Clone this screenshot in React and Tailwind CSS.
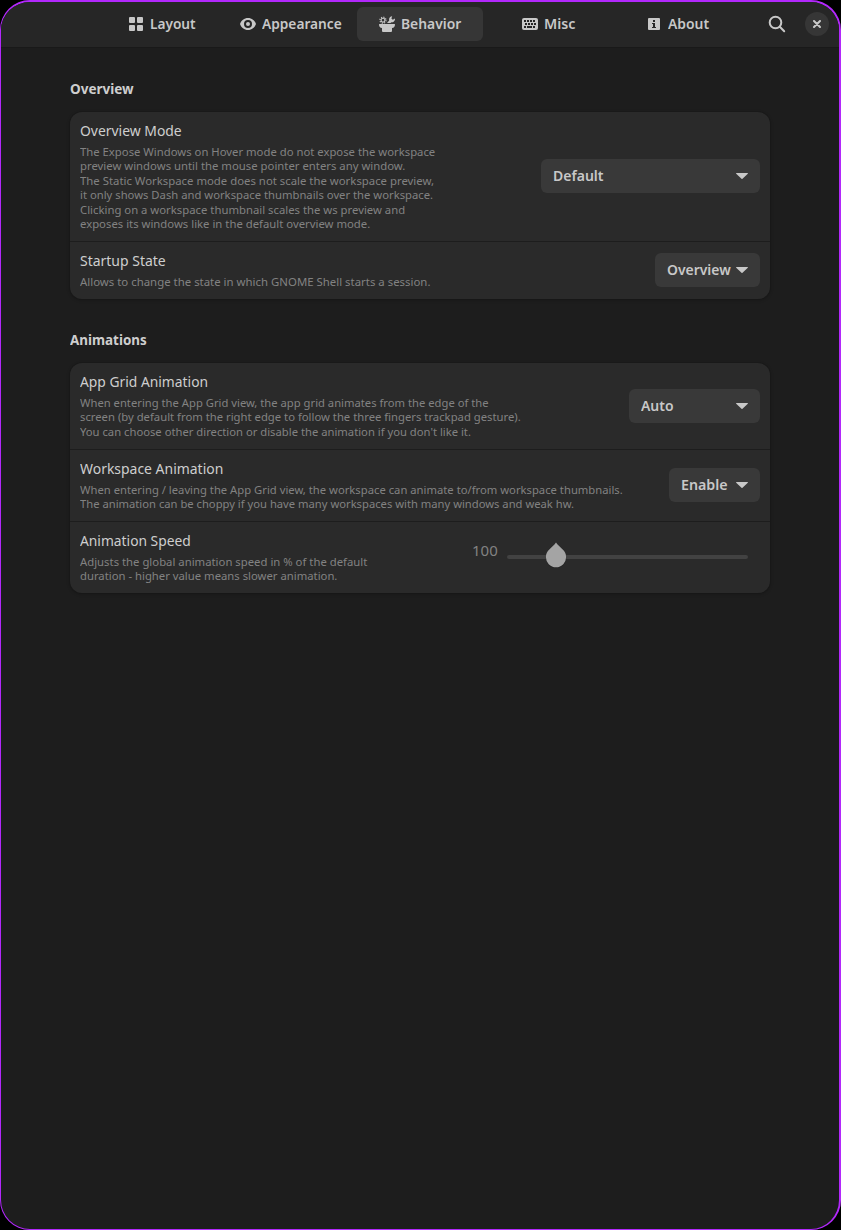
import { useLayoutEffect, useRef } from 'react';

function Fit({ w, className = '', children }) {
  const ref = useRef(null);
  useLayoutEffect(() => {
    const el = ref.current;
    el.style.transform = `scaleX(${w / el.offsetWidth})`;
  }, [w]);
  return (
    <span className={`block ${className}`} style={{ width: w }}>
      <span ref={ref} className="inline-block origin-left whitespace-nowrap align-top">{children}</span>
    </span>
  );
}

const LayoutIcon = () => (
  <svg width="16" height="16" viewBox="0 0 16 16" fill="currentColor">
    <rect x="1" y="1" width="6" height="6" rx="1" />
    <rect x="9" y="1" width="6" height="6" rx="1" />
    <rect x="1" y="9" width="6" height="6" rx="1" />
    <rect x="9" y="9" width="6" height="6" rx="1" />
  </svg>
);

const EyeIcon = () => (
  <svg width="16" height="16" viewBox="0 0 16 16" fill="currentColor">
    <path fillRule="evenodd" d="M8 2C4.2 2 1.200 4.500 0 8c1.200 3.500 4.200 6 8 6s6.800-2.500 8-6c-1.200-3.500-4.200-6-8-6zm0 2a4 4 0 1 1 0 8 4 4 0 0 1 0-8z" />
    <circle cx="8" cy="8" r="2" />
  </svg>
);

const BehaviorIcon = () => (
  <svg width="16" height="16" viewBox="0 0 16 16" fill="currentColor">
    <circle cx="4" cy="4.200" r="1.900" fill="none" stroke="currentColor" strokeWidth="1.100" />
    <circle cx="4" cy="4.200" r="3" fill="none" stroke="currentColor" strokeWidth="1.300" strokeDasharray="1.150 1.206" />
    <path d="M8 7 10.200 4.600C9.600 2.400 11 .5 13.200.3L12.400 2.500l1.400 1.200L16 2.500c.2 2.400-1.600 4-3.600 3.800L11.500 7z" />
    <path d="M.5 8h15a.5.5 0 0 1 .5.500c0 2-1 3.300-3 3.500v3a1 1 0 0 1-1 1H4a1 1 0 0 1-1-1v-3c-2-.2-3-1.500-3-3.500A.5.500 0 0 1 .5 8z" />
  </svg>
);

const KeyboardIcon = () => (
  <svg width="16" height="16" viewBox="0 0 16 16">
    <rect y="2" width="16" height="12" rx="2" fill="currentColor" />
    <path fill="#262626" d="M2 4h2v2H2zM5 4h2v2H5zM8 4h2v2H8zM11 4h2v2h-2zM3 7h2v2H3zM6 7h2v2H6zM9 7h2v2H9zM12 7h2v2h-2zM2 10h2v2H2zM5 10h5v2H5zM11 10h2v2h-2z" />
  </svg>
);

const AboutIcon = () => (
  <svg width="16" height="16" viewBox="0 0 16 16">
    <rect x="2" y="2" width="12" height="12" rx="1" fill="currentColor" />
    <path fill="#262626" d="M7 4h2v2H7zM6 7h3v4h1v1H6v-1h1V8H6z" />
  </svg>
);

const SearchIcon = () => (
  <svg width="18" height="18" viewBox="0 0 18 18" fill="none" stroke="currentColor" strokeWidth="2">
    <circle cx="7.500" cy="7.500" r="5.800" />
    <path d="m11.800 11.800 4.400 4.400" strokeLinecap="round" />
  </svg>
);

const Arrow = () => (
  <svg width="12" height="6" viewBox="0 0 12 6" fill="currentColor">
    <path d="M.5 0h11c.5 0 .6.500.3.800L6.500 5.800a.7.7 0 0 1-1 0L.2.800C-.1.500 0 0 .5 0z" />
  </svg>
);

const tabs = [
  { label: 'Layout', w: 46, textW: 45.500, Icon: LayoutIcon },
  { label: 'Appearance', w: 80, textW: 79.500, Icon: EyeIcon },
  { label: 'Behavior', w: 61, textW: 60, Icon: BehaviorIcon, active: true },
  { label: 'Misc', w: 32, textW: 31.300, Icon: KeyboardIcon },
  { label: 'About', w: 41.5, textW: 40.700, Icon: AboutIcon },
];

function Select({ className, label, w }) {
  return (
    <button className={`flex h-[34px] shrink-0 items-center justify-between rounded-md bg-[#393939] px-3 text-[15px] leading-5 font-semibold text-[#c8c8c8] ${className}`}>
      <Fit w={w} className="pb-0.5">{label}</Fit>
      <Arrow />
    </button>
  );
}

function Row({ className, title, titleW, lines, children }) {
  return (
    <div className={`flex items-start justify-between px-2.5 ${className}`}>
      <div className="pt-2">
        <Fit w={titleW} className="h-5 text-[15px] leading-5 text-[#cecece]">{title}</Fit>
        <div className="pt-[5px] text-[11.5px] leading-[14.4px] text-[#828282]">
          {lines.map(([text, w]) => (
            <Fit key={text} w={w} className="h-[14.4px]">{text}</Fit>
          ))}
        </div>
      </div>
      {children}
    </div>
  );
}

const card = 'overflow-hidden rounded-xl bg-[#2a2a2a] shadow-[0_1px_3px_1px_rgba(0,0,0,0.15),0_0_0_1px_rgba(0,0,0,0.05)]';

export default function App() {
  return (
    <div className="h-[1230px] w-[841px] bg-black font-['Noto_Sans',sans-serif]">
      <div className="h-full overflow-hidden rounded-[30px] border-t-2 border-r-2 border-b border-l border-[#b228fb] bg-[#1d1d1d]">
        <header className="flex h-[46px] items-start border-b border-[#191919] bg-[#262626] pt-[5px] pl-[98px] text-[#c8c8c8]">
          <nav className="flex gap-[3px]">
            {tabs.map(({ label, w, textW, Icon, active }) => (
              <button key={label} className={`flex h-[34px] w-[126px] items-center justify-center gap-1.5 rounded-md text-[15px] leading-5 font-semibold ${active ? 'bg-[#363636]' : ''}`}>
                <Icon />
                <span className="pb-0.5 text-left" style={{ width: w }}>
                  <Fit w={textW}>{label}</Fit>
                </span>
              </button>
            ))}
          </nav>
          <button className="mt-2 ml-[27px]"><SearchIcon /></button>
          <button className="mt-[5px] ml-[19px] flex size-6 items-center justify-center rounded-full bg-[#363636]">
            <svg width="8" height="8" viewBox="0 0 8 8" stroke="currentColor" strokeWidth="2" strokeLinecap="round">
              <path d="m1 1 6 6M7 1 1 7" />
            </svg>
          </button>
        </header>

        <main className="pl-[69px]">
          <div className="w-[700px]">
            <h2 className="pt-[30px] text-[15px] leading-5 font-bold text-[#cecece]"><Fit w={64}>Overview</Fit></h2>
            <section className={`mt-3.5 h-[187px] ${card}`}>
              <Row
                className="h-[130px] border-b border-[#1d1d1d]"
                title="Overview Mode"
                titleW={102}
                lines={[
                  ['The Expose Windows on Hover mode do not expose the workspace', 354.8],
                  ['preview windows until the mouse pointer enters any window.', 325.2],
                  ['The Static Workspace mode does not scale the workspace preview,', 354.500],
                  ['it only shows Dash and workspace thumbnails over the workspace.', 353.5],
                  ['Clicking on a workspace thumbnail scales the ws preview and', 324.800],
                  ['exposes its windows like in the default overview mode.', 290.5],
                ]}
              >
                <Select className="mt-[47px] w-[219px]" label="Default" w={50.500} />
              </Row>
              <Row
                className="h-[57px]"
                title="Startup State"
                titleW={85.700}
                lines={[['Allows to change the state in which GNOME Shell starts a session.', 350]]}
              >
                <Select className="mt-[11px] w-[105px]" label="Overview" w={64} />
              </Row>
            </section>

            <h2 className="pt-[30px] text-[15px] leading-5 font-bold text-[#cecece]"><Fit w={76.800}>Animations</Fit></h2>
            <section className={`mt-3.5 h-[230px] ${card}`}>
              <Row
                className="h-[87px] border-b border-[#1d1d1d]"
                title="App Grid Animation"
                titleW={128.2}
                lines={[
                  ['When entering the App Grid view, the app grid animates from the edge of the', 408.300],
                  ['screen (by default from the right edge to follow the three fingers trackpad gesture).', 440.500],
                  ["You can choose other direction or disable the animation if you don't like it.", 391],
                ]}
              >
                <Select className="mt-[26px] w-[131px]" label="Auto" w={32.500} />
              </Row>
              <Row
                className="h-[72px] border-b border-[#1d1d1d]"
                title="Workspace Animation"
                titleW={143.2}
                lines={[
                  ['When entering / leaving the App Grid view, the workspace can animate to/from workspace thumbnails.', 543.2],
                  ['The animation can be choppy if you have many workspaces with many windows and weak hw.', 494.5],
                ]}
              >
                <Select className="mt-[18px] w-[91px]" label="Enable" w={46.500} />
              </Row>
              <Row
                className="h-[71px]"
                title="Animation Speed"
                titleW={110.5}
                lines={[
                  ['Adjusts the global animation speed in % of the default', 287.5],
                  ['duration - higher value means slower animation.', 257.3],
                ]}
              >
                <div className="flex pt-[18px] pr-3">
                  <Fit w={26} className="h-5 text-[15px] leading-5 text-[#828282]">100</Fit>
                  <svg className="mt-px ml-[9px]" width="241" height="30" viewBox="0 0 241 30">
                    <rect y="14" width="241" height="4" rx="2" fill="#424242" />
                    <path d="M49 1.500c1.600 2.200 3.800 4.200 6.700 7.100a10.200 10.200 0 1 1-13.400 0C45.200 5.700 47.400 3.700 49 1.500z" fill="#1d1d1d" opacity=".5" transform="translate(0 .6)" />
                    <path d="M49 1.500c1.600 2.200 3.800 4.200 6.700 7.100a10.100 10.100 0 1 1-13.400 0C45.200 5.700 47.400 3.700 49 1.500z" fill="#a4a4a4" />
                  </svg>
                </div>
              </Row>
            </section>
          </div>
        </main>
      </div>
    </div>
  );
}
